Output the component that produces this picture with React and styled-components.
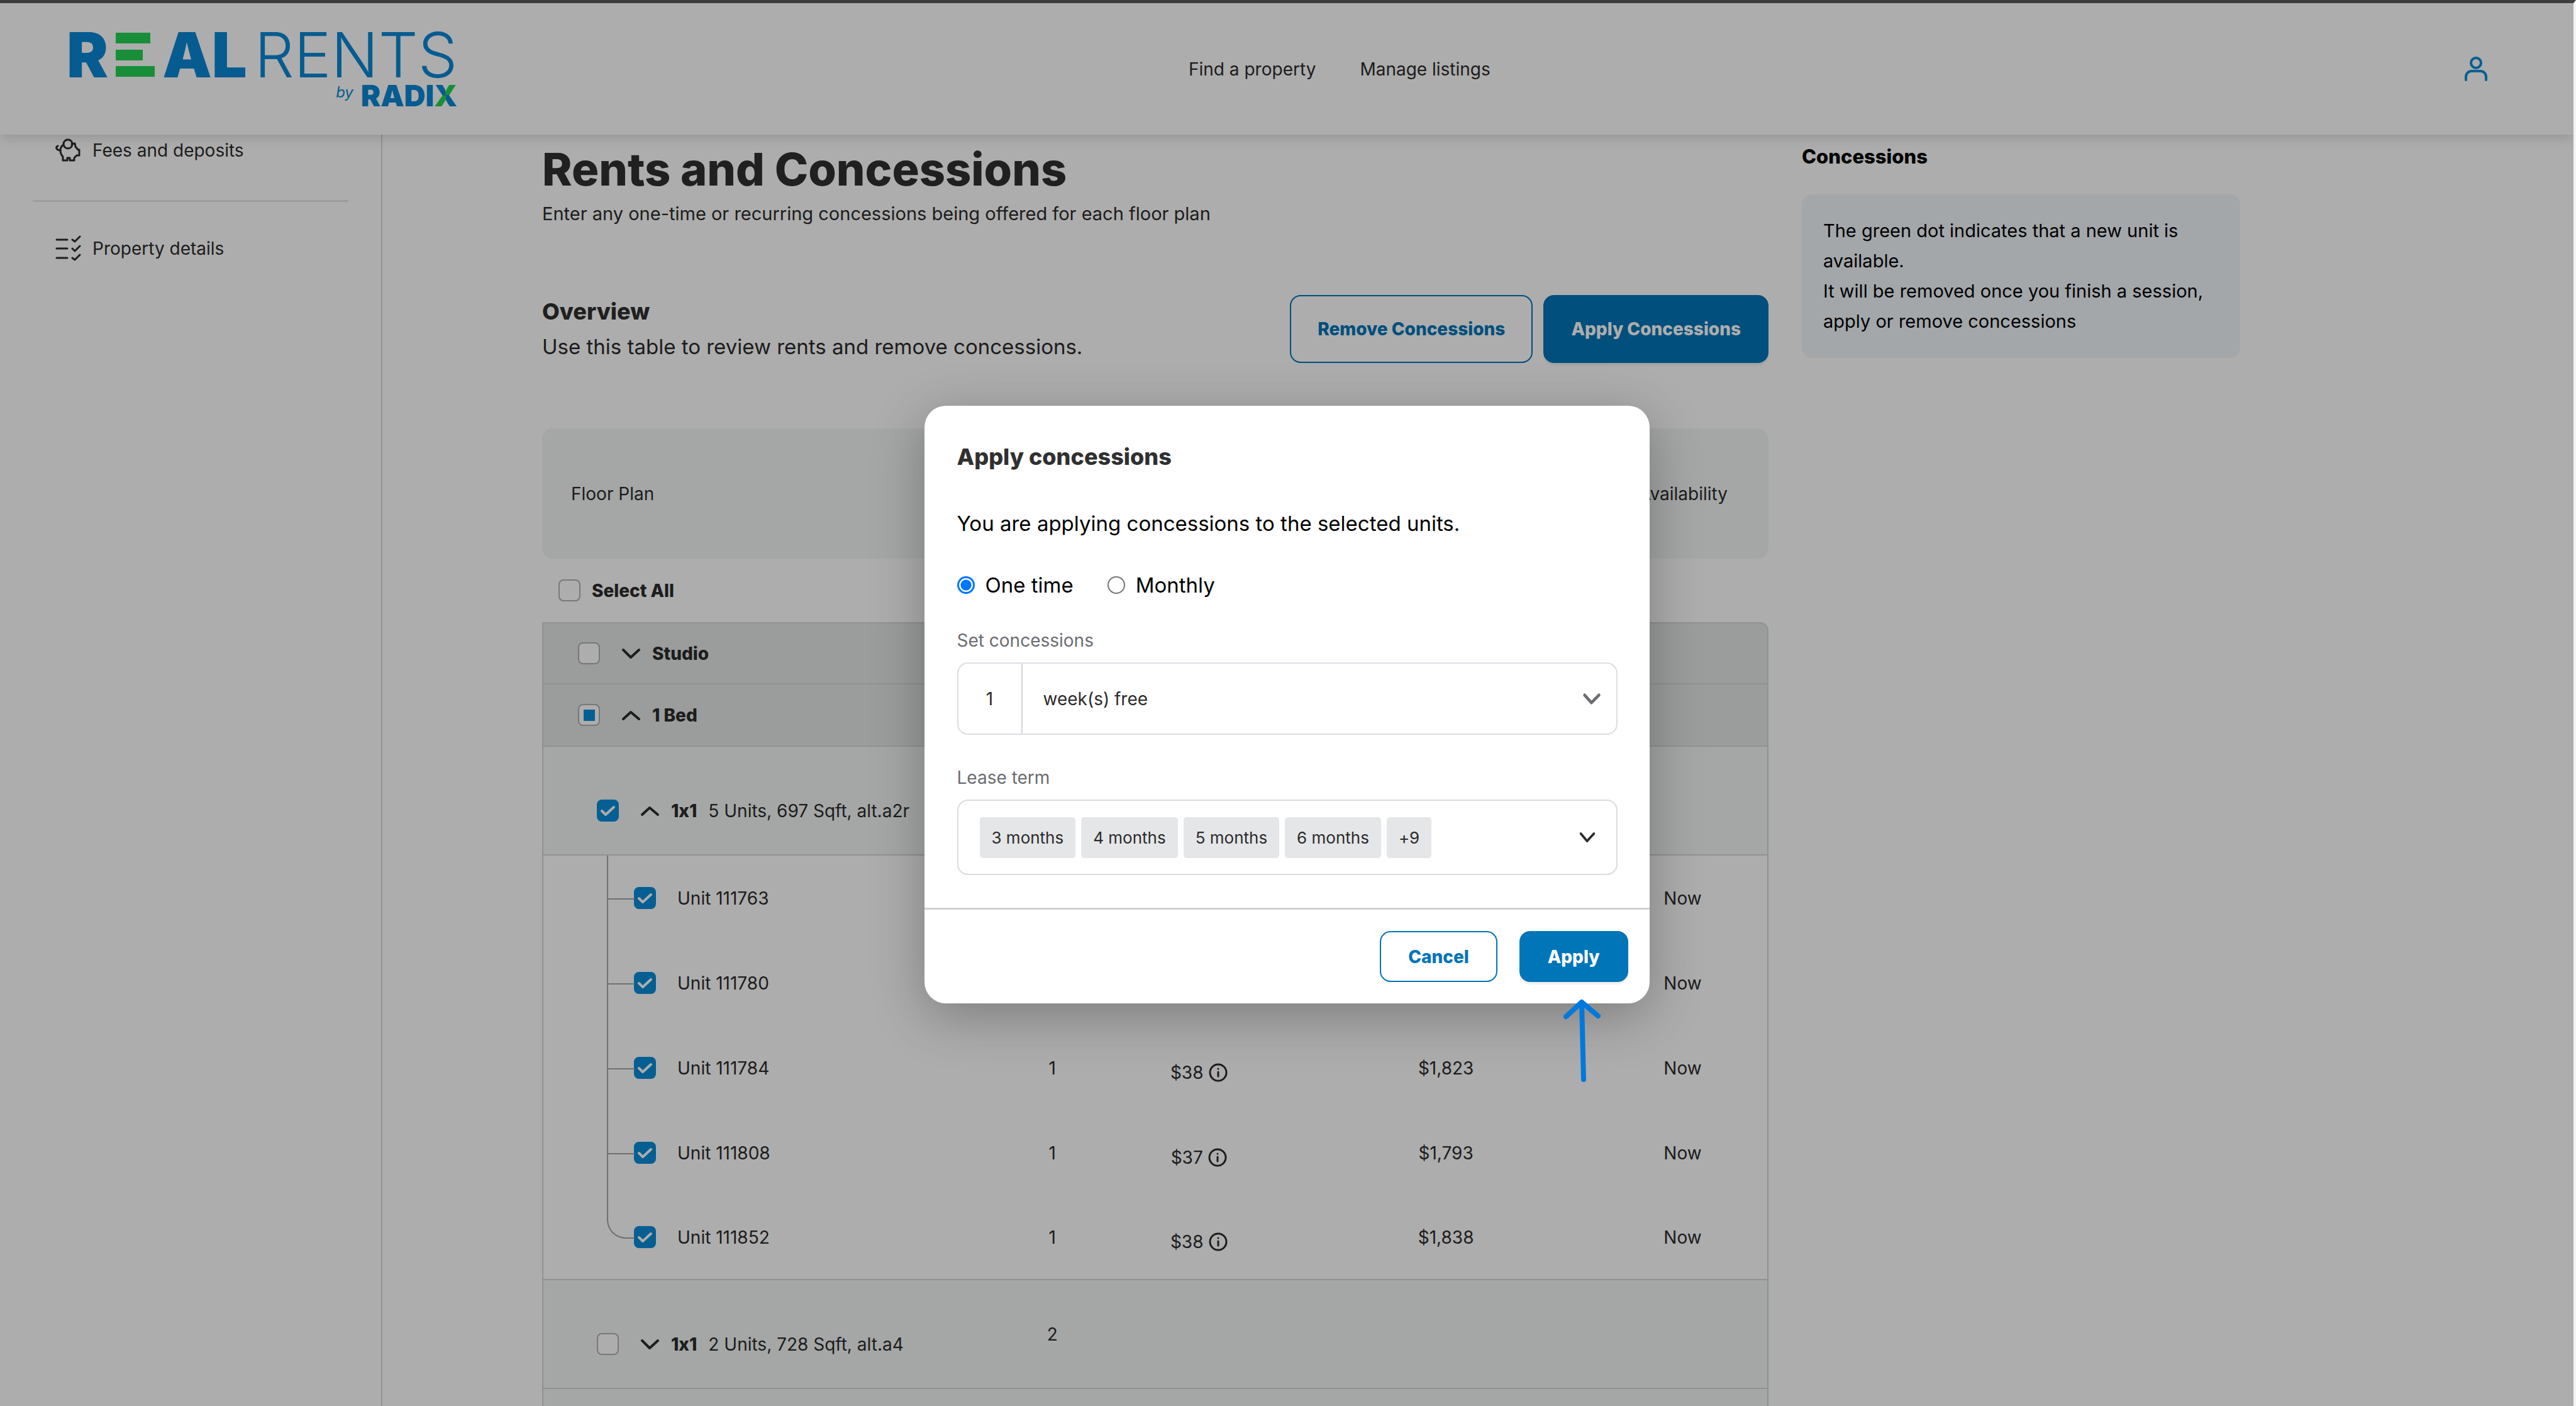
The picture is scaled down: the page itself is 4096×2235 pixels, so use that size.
import React from "react";
import styled, { createGlobalStyle, css } from "styled-components";

const blue = "#0075b8";
const ink = "#2b2b2b";
const line = "#d5d8d7";

const GlobalStyle = createGlobalStyle`
  *, *::before, *::after { box-sizing: border-box; }
  body {
    margin: 0;
    background: #fff;
    color: ${ink};
    font-family: Inter, "Liberation Sans", sans-serif;
    font-size: 28px;
    line-height: 40px;
    font-variant-ligatures: no-contextual;
  }
  button, input, select { font: inherit; color: inherit; }
  h1, h2, h3, p, hr { margin: 0; }
`;

/* ---------- frame ---------- */

const Frame = styled.div`
  position: relative;
  height: 100vh;
  overflow: hidden;
  border-top: 5px solid #3c3e3d;
  border-right: 4px solid #f4f4f4;
  display: flex;
  flex-direction: column;
`;

const Header = styled.header`
  position: relative;
  flex: none;
  display: grid;
  grid-template-columns: 1890px 1fr auto;
  align-items: center;
  height: 209px;
  padding-right: 137px;
  background: #fff;
  box-shadow: 0 4px 20px rgba(0, 0, 0, 0.16);
`;

const Logo = styled.a`
  justify-self: start;
  margin-left: 106px;
  color: #0a88d5;
  text-decoration: none;
  display: flex;
  flex-direction: column;
  align-items: flex-end;
  gap: 11px;
`;

const Wordmark = styled.span`
  display: flex;
  align-items: center;
  gap: 12px;
  height: 74px;
  font-size: 99px;
  line-height: 74px;
`;

const Heavy = styled.span`
  font-weight: 900;
`;

const Light = styled.span`
  font-weight: 300;
`;

const EBars = styled.svg`
  display: block;
  width: 62px;
  height: 70px;
  fill: #23d152;
`;

const Byline = styled.span`
  display: flex;
  align-items: flex-start;
  gap: 12px;
  height: 34px;
`;

const By = styled.span`
  font-size: 24px;
  font-style: italic;
  line-height: 24px;
`;

const Radix = styled.span`
  font-size: 47px;
  font-weight: 900;
  line-height: 34px;
`;

const TwoTone = styled.span`
  color: transparent;
  background: conic-gradient(#23d152 0 25%, #0a88d5 0 50%, #23d152 0 75%, #0a88d5 0);
  background-clip: text;
  -webkit-background-clip: text;
`;

const Nav = styled.nav`
  display: flex;
  gap: 70px;
`;

const NavLink = styled.a`
  color: inherit;
  text-decoration: none;
`;

const IconButton = styled.button`
  display: grid;
  place-items: center;
  padding: 0;
  border: 0;
  background: none;
  color: ${(p) => p.$color || ink};
`;

const Stroke = styled.svg`
  display: block;
  flex: none;
  fill: none;
  stroke: currentColor;
  stroke-width: ${(p) => p.$w || 4};
  stroke-linecap: round;
  stroke-linejoin: round;
`;

const Body = styled.div`
  flex: 1;
  min-height: 0;
  display: flex;
  align-items: stretch;
`;

/* ---------- sidebar ---------- */

const Sidebar = styled.aside`
  flex: none;
  width: 608px;
  border-right: 2px solid #d8d8d8;
`;

const SideLink = styled.a`
  display: flex;
  align-items: center;
  gap: 18px;
  height: 50px;
  padding-left: 88px;
  color: inherit;
  text-decoration: none;
`;

const SideRule = styled.hr`
  height: 3px;
  margin: 54px 52px 49px;
  border: 0;
  background: #e8e8e8;
`;

/* ---------- content ---------- */

const Content = styled.main`
  flex: 0 1 2204px;
  padding: 11px 0 0 254px;
`;

const Title = styled.h1`
  font-size: 72px;
  line-height: 88px;
  font-weight: 800;
  color: #303030;
`;

const Lead = styled.p`
  margin-top: 3px;
  font-size: 29px;
  line-height: 48px;
`;

const Intro = styled.section`
  display: flex;
  justify-content: space-between;
  align-items: center;
  margin: 103px 0 102px;
`;

const SectionTitle = styled.h2`
  font-size: 36px;
  line-height: 56px;
  font-weight: 800;
  color: #303030;
`;

const SectionText = styled.p`
  font-size: 33px;
  line-height: 56px;
`;

const Actions = styled.div`
  display: flex;
  gap: ${(p) => p.$gap};
`;

const Button = styled.button`
  height: ${(p) => (p.$tall ? "108px" : "81px")};
  padding: 0 ${(p) => (p.$tall ? "42px" : "43px")};
  border: 2px solid ${blue};
  border-radius: 17px;
  font-weight: 800;
  background: transparent;
  color: ${blue};
  ${(p) =>
    p.$primary &&
    css`
      background: ${blue};
      color: #fff;
      box-shadow: 0 4px 2px rgba(0, 0, 0, 0.06);
    `}
`;

const Table = styled.table`
  width: 100%;
  table-layout: fixed;
  border-collapse: separate;
  border-spacing: 0;
`;

const Col = styled.col`
  width: ${(p) => p.$w};
`;

const HeadCell = styled.th`
  height: 207px;
  padding: 0;
  font-weight: 400;
  background: #f3f7f6;
  &:first-child {
    padding-left: 46px;
    text-align: left;
    border-radius: 17px 0 0 17px;
  }
  &:last-child { border-radius: 0 17px 17px 0; }
`;

const SelectAllCell = styled.td`
  height: 101px;
  padding: 0 0 0 26px;
`;

const rowKinds = {
  group: { height: 99, bg: "#e4e7e6" },
  plan: { height: 173, bg: "#f3f7f6" },
  unit: { height: 135, bg: "#fff" },
};

const Row = styled.tr`
  & > td {
    position: relative;
    height: ${(p) => rowKinds[p.$kind].height}px;
    padding: 0;
    text-align: center;
    background: ${(p) => rowKinds[p.$kind].bg};
    border-bottom: ${(p) => (p.$kind === "unit" && !p.$last ? "0" : `2px solid ${line}`)};
  }
  & > td:first-child {
    text-align: left;
    border-left: 2px solid ${line};
  }
  & > td:last-child { border-right: 2px solid ${line}; }
  ${(p) =>
    p.$first &&
    css`
      & > td { border-top: 2px solid ${line}; }
      & > td:last-child { border-top-right-radius: 14px; }
    `}
`;

const Label = styled.div`
  display: flex;
  align-items: center;
  padding: ${(p) => p.$pad};
`;

const Name = styled.label`
  font-weight: ${(p) => (p.$bold ? 800 : 400)};
  margin-left: ${(p) => p.$ml || "0"};
`;

const ToggleButton = styled(IconButton)`
  width: 31px;
  margin: 0 18px 0 34px;
`;

const Price = styled.span`
  display: inline-flex;
  align-items: center;
  gap: 8px;
  padding-top: 14px;
`;

const Branch = styled.span`
  position: absolute;
  left: 101px;
  top: 0;
  width: 44px;
  height: ${(p) => (p.$last ? "69px" : "100%")};
  border-left: 2px solid #a6a6a6;
  ${(p) =>
    p.$last
      ? css`
          border-bottom: 2px solid #a6a6a6;
          border-bottom-left-radius: 30px;
        `
      : css`
          &::after {
            content: "";
            position: absolute;
            left: 0;
            top: 68px;
            width: 100%;
            border-top: 2px solid #a6a6a6;
          }
        `}
`;

/* ---------- check box ---------- */

const CheckWrap = styled.span`
  display: grid;
  flex: none;
  & > * { grid-area: 1 / 1; place-self: center; }
  & > svg { color: #fff; pointer-events: none; }
`;

const CheckInput = styled.input`
  appearance: none;
  width: 35px;
  height: 35px;
  margin: 0;
  border: 2px solid #b2b2b2;
  border-radius: 8px;
  background: #fff;
  &:checked { background: #088cd8; border-color: #088cd8; }
`;

const Mixed = styled.span`
  width: 18px;
  height: 18px;
  background: #088cd8;
`;

/* ---------- help ---------- */

const Help = styled.aside`
  flex: 0 1 697px;
  margin: 11px 0 0 53px;
`;

const HelpTitle = styled.h3`
  font-size: 31px;
  line-height: 48px;
  font-weight: 800;
  color: #000;
`;

const HelpBox = styled.div`
  margin-top: 36px;
  padding: 34px;
  border-radius: 17px;
  background: #f0f7fb;
  color: #000;
  font-size: 29px;
  line-height: 48px;
`;

/* ---------- dialog ---------- */

const Backdrop = styled.div`
  position: absolute;
  inset: 0;
  display: grid;
  place-items: center;
  background: rgba(0, 0, 0, 0.32);
`;

const Dialog = styled.section`
  position: relative;
  width: 1153px;
  max-width: 90%;
  border-radius: 34px;
  background: #fff;
  color: #000;
  box-shadow: 0 20px 84px rgba(0, 0, 0, 0.28);
`;

const DialogBody = styled.form`
  padding: 53px 51px 52px 52px;
`;

const DialogText = styled.p`
  margin-top: 53px;
  font-size: 33px;
  line-height: 50px;
`;

const Radios = styled.div`
  display: flex;
  gap: 54px;
  margin-top: 48px;
  font-size: 33px;
  line-height: 50px;
`;

const RadioLabel = styled.label`
  display: flex;
  align-items: center;
  gap: 17px;
`;

const Radio = styled.input`
  appearance: none;
  width: 28px;
  height: 28px;
  margin: 0;
  border: 2px solid #767676;
  border-radius: 50%;
  &:checked {
    border: 3px solid #0075ff;
    background: radial-gradient(circle, #0075ff 8px, transparent 9px);
  }
`;

const FieldLabel = styled.label`
  display: block;
  margin: ${(p) => p.$mt} 0 15px;
  color: #6b6c70;
`;

const Field = styled.div`
  display: flex;
  align-items: center;
  height: 115px;
  border: 2px solid #dcdee2;
  border-radius: 17px;
  color: ${ink};
`;

const Amount = styled.input`
  width: 102px;
  height: 100%;
  padding: 0;
  border: 0;
  border-right: 2px solid #d4d7dc;
  background: none;
  text-align: center;
`;

const SelectWrap = styled.div`
  flex: 1;
  height: 100%;
  display: grid;
  align-items: center;
  & > * { grid-area: 1 / 1; }
  & > svg { justify-self: end; margin-right: 25px; color: #6b6c70; pointer-events: none; }
`;

const Select = styled.select`
  appearance: none;
  height: 100%;
  padding: 0 33px;
  border: 0;
  background: none;
`;

const Multi = styled.button`
  display: flex;
  align-items: center;
  gap: 9px;
  width: 100%;
  height: 120px;
  padding: 0 33px 0 34px;
  border: 2px solid #dcdcdf;
  border-radius: 17px;
  background: #fff;
  color: ${ink};
  & > svg { margin-left: auto; }
`;

const Chip = styled.span`
  padding: 0 19px;
  border-radius: 5px;
  background: #e5e6e8;
  font-size: 26px;
  line-height: 65px;
`;

const DialogFooter = styled.footer`
  display: flex;
  justify-content: flex-end;
  padding: 34px;
  border-top: 3px solid #d2d2d2;
`;

const Pointer = styled.svg`
  position: absolute;
  right: 77px;
  bottom: -131px;
  fill: none;
  stroke: #0078dc;
  stroke-width: 8;
  stroke-linecap: round;
  stroke-linejoin: round;
`;

/* ---------- icons ---------- */

const UserIcon = () => (
  <Stroke width="36" height="40" viewBox="0 0 36 40">
    <circle cx="18" cy="10" r="8" />
    <path d="M2 37v-5a9 9 0 0 1 9-9h14a9 9 0 0 1 9 9v5" />
  </Stroke>
);

const PiggyIcon = () => (
  <Stroke $w="3" width="41" height="38" viewBox="0 0 41 38">
    <circle cx="20" cy="9" r="7" />
    <path d="M13 10c-3 2-5 5-5 9 0 5 2 8 4 10v6h7v-4h4v4h7v-4l4-4h4v-9h-2l-4-5-1-5-4 1h-1" />
    <path d="M8 19c-3 0-5-1-6-3s0-3 2-4" />
  </Stroke>
);

const ListIcon = () => (
  <Stroke $w="3" width="41" height="42" viewBox="0 0 41 42">
    <path d="M2 7h17M2 21h17M2 36h17" />
    <path d="M27 7l4 3 8-8M27 21l4 4 8-8M27 36l4 3 8-8" />
  </Stroke>
);

const Chevron = ({ up, w = 4, width = 31 }) => (
  <Stroke $w={w} width={width} height="18" viewBox="0 0 31 18" preserveAspectRatio="none">
    <path d={up ? "M3 15L15 4l13 11" : "M3 3l12 12L28 3"} />
  </Stroke>
);

const CheckIcon = () => (
  <Stroke width="35" height="35" viewBox="0 0 35 35">
    <path d="M8 18l6 6 13-12" />
  </Stroke>
);

const InfoIcon = () => (
  <Stroke $w="3" width="30" height="30" viewBox="0 0 30 30">
    <circle cx="15" cy="15" r="13" />
    <path d="M15 14v7M15 9v0" />
  </Stroke>
);

/* ---------- parts ---------- */

const CheckBox = ({ id, state }) => (
  <CheckWrap>
    <CheckInput id={id} type="checkbox" defaultChecked={state === "on"} />
    {state === "on" && <CheckIcon />}
    {state === "mixed" && <Mixed />}
  </CheckWrap>
);

const Empty = () => (
  <>
    <td />
    <td />
    <td />
  </>
);

const GroupRow = ({ id, name, state, open, first }) => (
  <Row $kind="group" $first={first}>
    <td>
      <Label $pad="0 0 0 55px">
        <CheckBox id={id} state={state} />
        <ToggleButton type="button" aria-label={name} aria-expanded={!!open}>
          <Chevron up={open} />
        </ToggleButton>
        <Name $bold htmlFor={id}>{name}</Name>
      </Label>
    </td>
    <td />
    <Empty />
  </Row>
);

const PlanRow = ({ id, name, detail, state, open, count }) => (
  <Row $kind="plan">
    <td>
      <Label $pad="32px 0 0 85px">
        <CheckBox id={id} state={state} />
        <ToggleButton type="button" aria-label={name} aria-expanded={!!open}>
          <Chevron up={open} />
        </ToggleButton>
        <Name $bold htmlFor={id}>{name}</Name>
        <Name $ml="18px" htmlFor={id}>{detail}</Name>
      </Label>
    </td>
    <td>{count}</td>
    <Empty />
  </Row>
);

const units = [
  { no: "111763", count: "", fee: "", rent: "" },
  { no: "111780", count: "", fee: "", rent: "" },
  { no: "111784", count: "1", fee: "$38", rent: "$1,823" },
  { no: "111808", count: "1", fee: "$37", rent: "$1,793" },
  { no: "111852", count: "1", fee: "$38", rent: "$1,838" },
];

const UnitRow = ({ unit, last }) => (
  <Row $kind="unit" $last={last}>
    <td>
      <Branch $last={last} />
      <Label $pad="0 0 0 144px">
        <CheckBox id={`unit-${unit.no}`} state="on" />
        <Name $ml="34px" htmlFor={`unit-${unit.no}`}>Unit {unit.no}</Name>
      </Label>
    </td>
    <td>{unit.count}</td>
    <td>{unit.fee && <Price>{unit.fee} <InfoIcon /></Price>}</td>
    <td>{unit.rent}</td>
    <td>Now</td>
  </Row>
);

export default function App() {
  return (
    <Frame>
      <GlobalStyle />
      <Header>
        <Logo href="#">
          <Wordmark>
            <Heavy>R</Heavy>
            <EBars viewBox="0 0 62 70">
              <rect width="55" height="17" />
              <rect y="27" width="43" height="17" />
              <rect y="53" width="62" height="17" />
            </EBars>
            <Heavy>AL</Heavy>
            <Light>RENTS</Light>
          </Wordmark>
          <Byline>
            <By>by</By>
            <Radix>RADI<TwoTone>X</TwoTone></Radix>
          </Byline>
        </Logo>
        <Nav>
          <NavLink href="#">Find a property</NavLink>
          <NavLink href="#">Manage listings</NavLink>
        </Nav>
        <IconButton type="button" aria-label="Account" $color="#088cd8">
          <UserIcon />
        </IconButton>
      </Header>

      <Body>
        <Sidebar>
          <SideLink href="#"><PiggyIcon />Fees and deposits</SideLink>
          <SideRule />
          <SideLink href="#"><ListIcon />Property details</SideLink>
        </Sidebar>

        <Content>
          <Title>Rents and Concessions</Title>
          <Lead>Enter any one-time or recurring concessions being offered for each floor plan</Lead>
          <Intro>
            <div>
              <SectionTitle>Overview</SectionTitle>
              <SectionText>Use this table to review rents and remove concessions.</SectionText>
            </div>
            <Actions $gap="17px">
              <Button type="button" $tall>Remove Concessions</Button>
              <Button type="button" $tall $primary>Apply Concessions</Button>
            </Actions>
          </Intro>

          <Table>
            <colgroup>
              <Col $w="37.4%" />
              <Col $w="8.4%" />
              <Col $w="15.5%" />
              <Col $w="24.8%" />
              <Col $w="13.9%" />
            </colgroup>
            <thead>
              <tr>
                <HeadCell scope="col">Floor Plan</HeadCell>
                <HeadCell />
                <HeadCell />
                <HeadCell />
                <HeadCell scope="col">Availability</HeadCell>
              </tr>
            </thead>
            <tbody>
              <tr>
                <SelectAllCell colSpan={5}>
                  <Label $pad="0">
                    <CheckBox id="all" />
                    <Name $bold $ml="18px" htmlFor="all">Select All</Name>
                  </Label>
                </SelectAllCell>
              </tr>
              <GroupRow id="studio" name="Studio" first />
              <GroupRow id="one-bed" name="1 Bed" state="mixed" open />
              <PlanRow id="a2r" name="1x1" detail="5 Units, 697 Sqft, alt.a2r" state="on" open />
              {units.map((u, i) => (
                <UnitRow key={u.no} unit={u} last={i === units.length - 1} />
              ))}
              <PlanRow id="a4" name="1x1" detail="2 Units, 728 Sqft, alt.a4" count="2" />
              <Row $kind="plan">
                <td />
                <td />
                <Empty />
              </Row>
            </tbody>
          </Table>
        </Content>

        <Help>
          <HelpTitle>Concessions</HelpTitle>
          <HelpBox>
            <p>The green dot indicates that a new unit is available.</p>
            <p>It will be removed once you finish a session, apply or remove concessions</p>
          </HelpBox>
        </Help>
      </Body>

      <Backdrop>
        <Dialog role="dialog" aria-labelledby="dialog-title">
          <DialogBody id="apply-form">
            <SectionTitle id="dialog-title">Apply concessions</SectionTitle>
            <DialogText>You are applying concessions to the selected units.</DialogText>
            <Radios>
              <RadioLabel><Radio type="radio" name="period" defaultChecked />One time</RadioLabel>
              <RadioLabel><Radio type="radio" name="period" />Monthly</RadioLabel>
            </Radios>
            <FieldLabel $mt="43px" htmlFor="amount">Set concessions</FieldLabel>
            <Field>
              <Amount id="amount" type="text" defaultValue="1" />
              <SelectWrap>
                <Select aria-label="Concession unit">
                  <option>week(s) free</option>
                </Select>
                <Chevron w={5} width={28} />
              </SelectWrap>
            </Field>
            <FieldLabel $mt="48px" htmlFor="lease">Lease term</FieldLabel>
            <Multi id="lease" type="button">
              <Chip>3 months</Chip>
              <Chip>4 months</Chip>
              <Chip>5 months</Chip>
              <Chip>6 months</Chip>
              <Chip>+9</Chip>
              <Chevron width={26} />
            </Multi>
          </DialogBody>
          <DialogFooter>
            <Actions $gap="35px">
              <Button type="button">Cancel</Button>
              <Button type="submit" form="apply-form" $primary>Apply</Button>
            </Actions>
          </DialogFooter>
          <Pointer width="64" height="140" viewBox="0 0 64 140">
            <path d="M8 30L33 7l26 22M33 7l3 123" />
          </Pointer>
        </Dialog>
      </Backdrop>
    </Frame>
  );
}
